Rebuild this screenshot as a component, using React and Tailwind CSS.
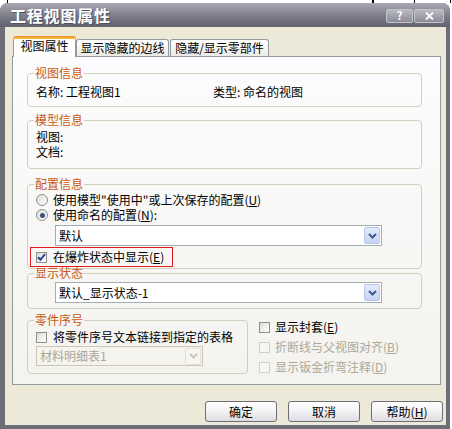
import React from 'react';

function Chevron({ disabled }) {
  return (
    <svg width="9" height="6" viewBox="0 0 9 6">
      <path d="M1 1 L4.5 4.5 L8 1" fill="none" stroke={disabled ? '#c9c7ba' : '#3f5a8e'} strokeWidth="2" />
    </svg>
  );
}

function Combo({ value, className, disabled }) {
  return (
    <div
      className={`flex items-center justify-between border ${
        disabled ? 'border-[#c9c7ba] bg-[#f4f3ee] text-[#aca899]' : 'border-[#a5acb2] bg-white'
      } ${className}`}
    >
      <span className="pl-[3px]">{value}</span>
      <span
        className={`mr-[1px] w-[16px] h-[17px] flex items-center justify-center rounded-[2px] border ${
          disabled
            ? 'border-[#e2e1da] bg-[#f7f6f1]'
            : 'border-[#b7c5e8] bg-gradient-to-b from-[#e4ebfb] to-[#c5d3f4]'
        }`}
      >
        <Chevron disabled={disabled} />
      </span>
    </div>
  );
}

function Check({ checked, disabled }) {
  return (
    <span
      className={`w-[11px] h-[11px] shrink-0 flex items-center justify-center border ${
        disabled ? 'border-[#d3d1c6] bg-[#f7f6f1]' : 'border-[#8e8f8f] bg-gradient-to-br from-[#dcdcd6] to-white'
      }`}
    >
      {checked && (
        <svg width="9" height="9" viewBox="0 0 9 9">
          <path d="M1 4.2 L3.4 6.8 L8 1.2" fill="none" stroke="#24409a" strokeWidth="2" />
        </svg>
      )}
    </span>
  );
}

function Radio({ selected }) {
  return (
    <span className="w-[12px] h-[12px] shrink-0 rounded-full border border-[#8e8f8f] bg-gradient-to-br from-[#dcdcd6] to-white flex items-center justify-center">
      {selected && <span className="w-[5px] h-[5px] rounded-full bg-[#3b5080]" />}
    </span>
  );
}

function Group({ title, className, children }) {
  return (
    <fieldset className={`border border-[#d0d0bf] rounded-[4px] px-[8px] ${className}`}>
      <legend className="-ml-[2px] px-[1px] leading-[12px] text-[#c85a14]">{title}</legend>
      {children}
    </fieldset>
  );
}

function Button({ children }) {
  return (
    <div className="w-[72px] h-[21px] rounded-[3px] border border-[#6f6e74] bg-gradient-to-b from-white via-[#f3f3f5] to-[#dcdbe0] flex items-center justify-center">
      {children}
    </div>
  );
}

export default function App() {
  return (
    <div className="w-[452px] h-[429px] bg-white overflow-hidden font-['Noto_Sans_CJK_SC',sans-serif] text-[12px] leading-[14px] text-black">
      {/* bits of the window behind */}
      <div className="h-[3px] flex">
        <span className="ml-[7px] w-[1px] bg-black" />
        <span className="ml-[364px] w-[2px] bg-black" />
        <span className="ml-[40px] w-[1px] bg-black" />
        <span className="ml-[35px] w-[1px] bg-black" />
      </div>

      <div className="w-[450px] h-[426px] bg-[#6e6e78] rounded-t-[8px] flex flex-col">
        {/* title bar */}
        <div className="h-[24px] rounded-t-[8px] bg-gradient-to-b from-[#a9a9b4] via-[#80808c] to-[#62626f] flex items-center pl-[10px] pr-[6px]">
          <span className="text-white font-bold text-[16px] leading-[18px] tracking-[0.8px] [text-shadow:1px_1px_0_#50505c]">
            工程视图属性
          </span>
          <div className="ml-auto flex gap-[1px] mt-[1px]">
            <div className="w-[27px] h-[14px] rounded-[2px] border border-[#c3c3cb] bg-gradient-to-b from-[#b9b9c3] to-[#8c8c98] flex items-center justify-center text-white font-bold text-[11px] leading-[11px]">
              ?
            </div>
            <div className="w-[30px] h-[14px] rounded-[2px] border border-[#c3c3cb] bg-gradient-to-b from-[#b9b9c3] to-[#8c8c98] flex items-center justify-center">
              <svg width="9" height="8" viewBox="0 0 9 8">
                <path d="M1 0.5 L8 7.5 M8 0.5 L1 7.5" stroke="white" strokeWidth="1.8" />
              </svg>
            </div>
          </div>
        </div>

        {/* client area */}
        <div className="flex-1 ml-[5px] mr-[4px] mb-[4px] bg-[#ece9d8] flex flex-col pt-[9px]">
          {/* tabs */}
          <div className="ml-[8px] h-[20px] flex items-end">
            <div className="relative z-10 -mb-[1px] w-[63px] h-[21px] flex flex-col">
              <div className="h-[3px] rounded-t-[3px] bg-gradient-to-b from-[#e68b2c] to-[#ffc73c]" />
              <div className="flex-1 bg-white border-x border-[#919b9c] text-center">视图属性</div>
            </div>
            <div className="w-[93px] h-[17px] rounded-t-[3px] border border-b-0 border-[#919b9c] bg-gradient-to-b from-white to-[#ecebe6] text-center pt-[1px]">
              显示隐藏的边线
            </div>
            <div className="ml-[1px] w-[99px] h-[17px] rounded-t-[3px] border border-b-0 border-[#919b9c] bg-gradient-to-b from-white to-[#ecebe6] text-center pt-[1px]">
              隐藏/显示零部件
            </div>
          </div>

          {/* panel */}
          <div className="ml-[7px] w-[429px] h-[329px] border border-[#919b9c] bg-gradient-to-b from-[#fcfcfe] to-[#f4f3ee] pt-[10px] pl-[14px] pr-[18px] flex flex-col">
            <Group title="视图信息" className="pt-[6px] pb-[7px]">
              <div className="h-[14px] flex">
                <span className="w-[177px]">名称: 工程视图1</span>
                <span>类型: 命名的视图</span>
              </div>
            </Group>

            <Group title="模型信息" className="mt-[7px] pt-[4px] pb-[9px]">
              <div className="h-[14px]">视图:</div>
              <div className="h-[14px] mt-[1px]">文档:</div>
            </Group>

            <Group title="配置信息" className="mt-[9px] pt-[3px] pb-[1px]">
              <div className="h-[14px] flex items-center gap-[5px]">
                <Radio />
                <span>
                  使用模型"使用中"或上次保存的配置(<u>U</u>)
                </span>
              </div>
              <div className="h-[14px] mt-[1px] flex items-center gap-[5px]">
                <Radio selected />
                <span>
                  使用命名的配置(<u>N</u>):
                </span>
              </div>
              <Combo value="默认" className="mt-[3px] ml-[19px] w-[327px] h-[21px]" />
              <div className="mt-[1px] -ml-[6px] w-[143px] h-[20px] border border-[#e21d1d] pl-[5px] flex items-center gap-[6px]">
                <Check checked />
                <span>
                  在爆炸状态中显示(<u>E</u>)
                </span>
              </div>
            </Group>

            <Group title="显示状态" className="-mt-[2px] pt-[3px] pb-[5px]">
              <Combo value="默认_显示状态-1" className="ml-[19px] w-[327px] h-[21px]" />
            </Group>

            <div className="mt-[5px] flex">
              <Group title="零件序号" className="w-[221px] pt-[4px] pb-[5px]">
                <div className="h-[14px] flex items-center gap-[6px]">
                  <Check />
                  <span>将零件序号文本链接到指定的表格</span>
                </div>
                <Combo value="材料明细表1" disabled className="mt-[2px] w-[167px] h-[20px]" />
              </Group>
              <div className="ml-[11px] pt-[6px] flex flex-col gap-[6px]">
                <div className="h-[14px] flex items-center gap-[5px]">
                  <Check />
                  <span>
                    显示封套(<u>E</u>)
                  </span>
                </div>
                <div className="h-[14px] flex items-center gap-[5px] text-[#aca899]">
                  <Check disabled />
                  <span>
                    折断线与父视图对齐(<u>B</u>)
                  </span>
                </div>
                <div className="h-[14px] flex items-center gap-[5px] text-[#aca899]">
                  <Check disabled />
                  <span>
                    显示钣金折弯注释(<u>D</u>)
                  </span>
                </div>
              </div>
            </div>
          </div>

          {/* buttons */}
          <div className="mt-[16px] mr-[3px] flex justify-end gap-[11px]">
            <Button>确定</Button>
            <Button>取消</Button>
            <Button>
              <span>
                帮助(<u>H</u>)
              </span>
            </Button>
          </div>
        </div>
      </div>
    </div>
  );
}
